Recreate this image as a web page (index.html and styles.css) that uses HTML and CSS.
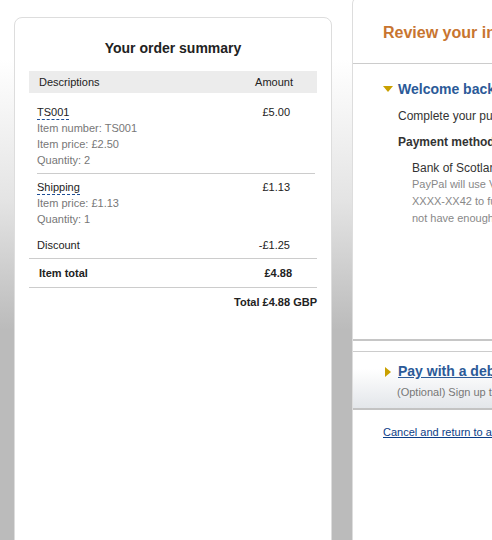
FILE: index.html
```html
<!DOCTYPE html>
<html lang="en">
<head>
  <meta charset="UTF-8" />
  <meta name="viewport" content="width=device-width, initial-scale=1.0" />
  <title>Review your information</title>
  <link rel="stylesheet" href="styles.css">
</head>
<body>
  <div class="page">

    <!-- Order summary card -->
    <aside class="summary">
      <h2>Your order summary</h2>
      <div class="head-row">
        <span>Descriptions</span>
        <span class="amt">Amount</span>
      </div>

      <div class="item">
        <div class="line">
          <span class="name">TS001</span>
          <span class="amt">£5.00</span>
        </div>
        <p class="sub">Item number: TS001</p>
        <p class="sub">Item price: £2.50</p>
        <p class="sub">Quantity: 2</p>
      </div>

      <div class="item ship">
        <div class="line">
          <span class="name">Shipping</span>
          <span class="amt">£1.13</span>
        </div>
        <p class="sub">Item price: £1.13</p>
        <p class="sub">Quantity: 1</p>
        <div class="line discount">
          <span>Discount</span>
          <span class="amt">-£1.25</span>
        </div>
      </div>

      <div class="total-row">
        <span>Item total</span>
        <span class="amt">£4.88</span>
      </div>
      <p class="grand">Total £4.88 GBP</p>
    </aside>

    <!-- Review panel -->
    <main class="review">
      <h1>Review your information</h1>

      <section class="welcome">
        <h3><span class="tri-down"></span>Welcome back!</h3>
        <p class="lead">Complete your purchase with PayPal.</p>
        <p class="label">Payment method</p>
        <div class="bank">
          <p>Bank of Scotland</p>
          <p class="note">PayPal will use Visa Debit<br>XXXX-XX42 to fund this payment if you do<br>not have enough balance.</p>
        </div>
      </section>

      <section class="debit">
        <h3><span class="tri-right"></span><a href="#">Pay with a debit or credit card</a></h3>
        <p>(Optional) Sign up to PayPal</p>
      </section>

      <a class="cancel" href="#">Cancel and return to another page</a>
    </main>

  </div>
</body>
</html>
```

FILE: styles.css
```css
html {
  background: #bbb linear-gradient(#fff 60px, #e4e4e4 200px, #bbb 330px) no-repeat;
  min-height: 100%;
}
body {
  margin: 0;
  font-family: "Liberation Sans", Arial, sans-serif;
  color: #333;
  overflow: hidden;
}
p { margin: 0; }
.page {
  display: flex;
  align-items: flex-start;
  gap: 20px;
  padding-left: 14px;
  width: 800px;
}

/* order summary */
.summary {
  flex: 0 0 288px;
  margin-top: 17px;
  height: 560px;
  padding: 21px 14px 0;
  background: #fff;
  border: 1px solid #ddd;
  border-radius: 8px 8px 0 0;
  font-size: 11px;
}
.summary h2 {
  margin: 0 0 14px;
  font-size: 14px;
  line-height: 18px;
  text-align: center;
  color: #222;
}
.head-row {
  display: flex;
  justify-content: space-between;
  height: 22px;
  line-height: 22px;
  padding: 0 24px 0 10px;
  background: #ececec;
  color: #222;
}
.amt { text-align: right; }
.item {
  margin: 0 2px 0 8px;
  padding: 11px 0 5px;
  line-height: 16px;
  border-bottom: 1px solid #ccc;
}
.item.ship {
  margin: 0;
  padding: 5px 0 5px 8px;
}
.line {
  display: flex;
  justify-content: space-between;
  padding-right: 25px;
  color: #222;
}
.item.ship .line { padding-right: 27px; }
.name {
  border-bottom: 1px dashed #1f4f96;
  line-height: 14px;
  margin-top: 1px;
  height: 14px;
}
.sub { color: #777; }
.line.discount { margin-top: 10px; }
.total-row {
  display: flex;
  justify-content: space-between;
  padding: 6px 25px 6px 10px;
  line-height: 16px;
  font-weight: bold;
  color: #222;
  border-bottom: 1px solid #ccc;
}
.grand {
  margin-top: 6px;
  text-align: right;
  font-weight: bold;
  line-height: 16px;
  color: #222;
}

/* review panel */
.review {
  flex: 0 0 420px;
  margin-top: -4px;
  height: 580px;
  background: #fff;
  border-left: 1px solid #ddd;
  border-top: 1px solid #ddd;
  border-top-left-radius: 8px;
}
.review h1 {
  margin: 0;
  padding: 26px 0 0 30px;
  height: 40px;
  font-size: 16px;
  line-height: 20px;
  color: #c87530;
  border-bottom: 1px solid #ccc;
}
.welcome {
  padding: 16px 0 112px 30px;
  border-bottom: 2px solid #c6c6c6;
  font-size: 12px;
}
.welcome h3,
.debit h3 {
  margin: 0;
  font-size: 14px;
  line-height: 18px;
  color: #2b5a98;
  display: flex;
  align-items: center;
}
.tri-down {
  width: 0;
  height: 0;
  border-left: 5px solid transparent;
  border-right: 5px solid transparent;
  border-top: 6px solid #c9a000;
  margin: 0 5px 0 0;
}
.tri-right {
  width: 0;
  height: 0;
  border-top: 5px solid transparent;
  border-bottom: 5px solid transparent;
  border-left: 6px solid #c9a000;
  margin: 2px 7px 0 2px;
}
.lead {
  margin: 10px 0 0 15px;
  line-height: 16px;
}
.label {
  margin: 10px 0 0 15px;
  line-height: 16px;
  font-weight: bold;
}
.bank {
  margin: 10px 0 0 29px;
  line-height: 16px;
}
.bank .note {
  font-size: 11px;
  line-height: 17px;
  color: #888;
  white-space: nowrap;
}
.debit {
  margin-top: 10px;
  padding: 10px 0 9px 30px;
  background: linear-gradient(#fff 30%, #e3e6ea);
  border-top: 1px solid #ccc;
  border-bottom: 2px solid #c3c3c3;
}
.debit a { color: #2b5a98; }
.debit p {
  margin: 5px 0 0 14px;
  font-size: 11px;
  line-height: 14px;
  color: #777;
}
.cancel {
  display: block;
  margin: 16px 0 0 30px;
  font-size: 11px;
  color: #0b3d87;
}
```
